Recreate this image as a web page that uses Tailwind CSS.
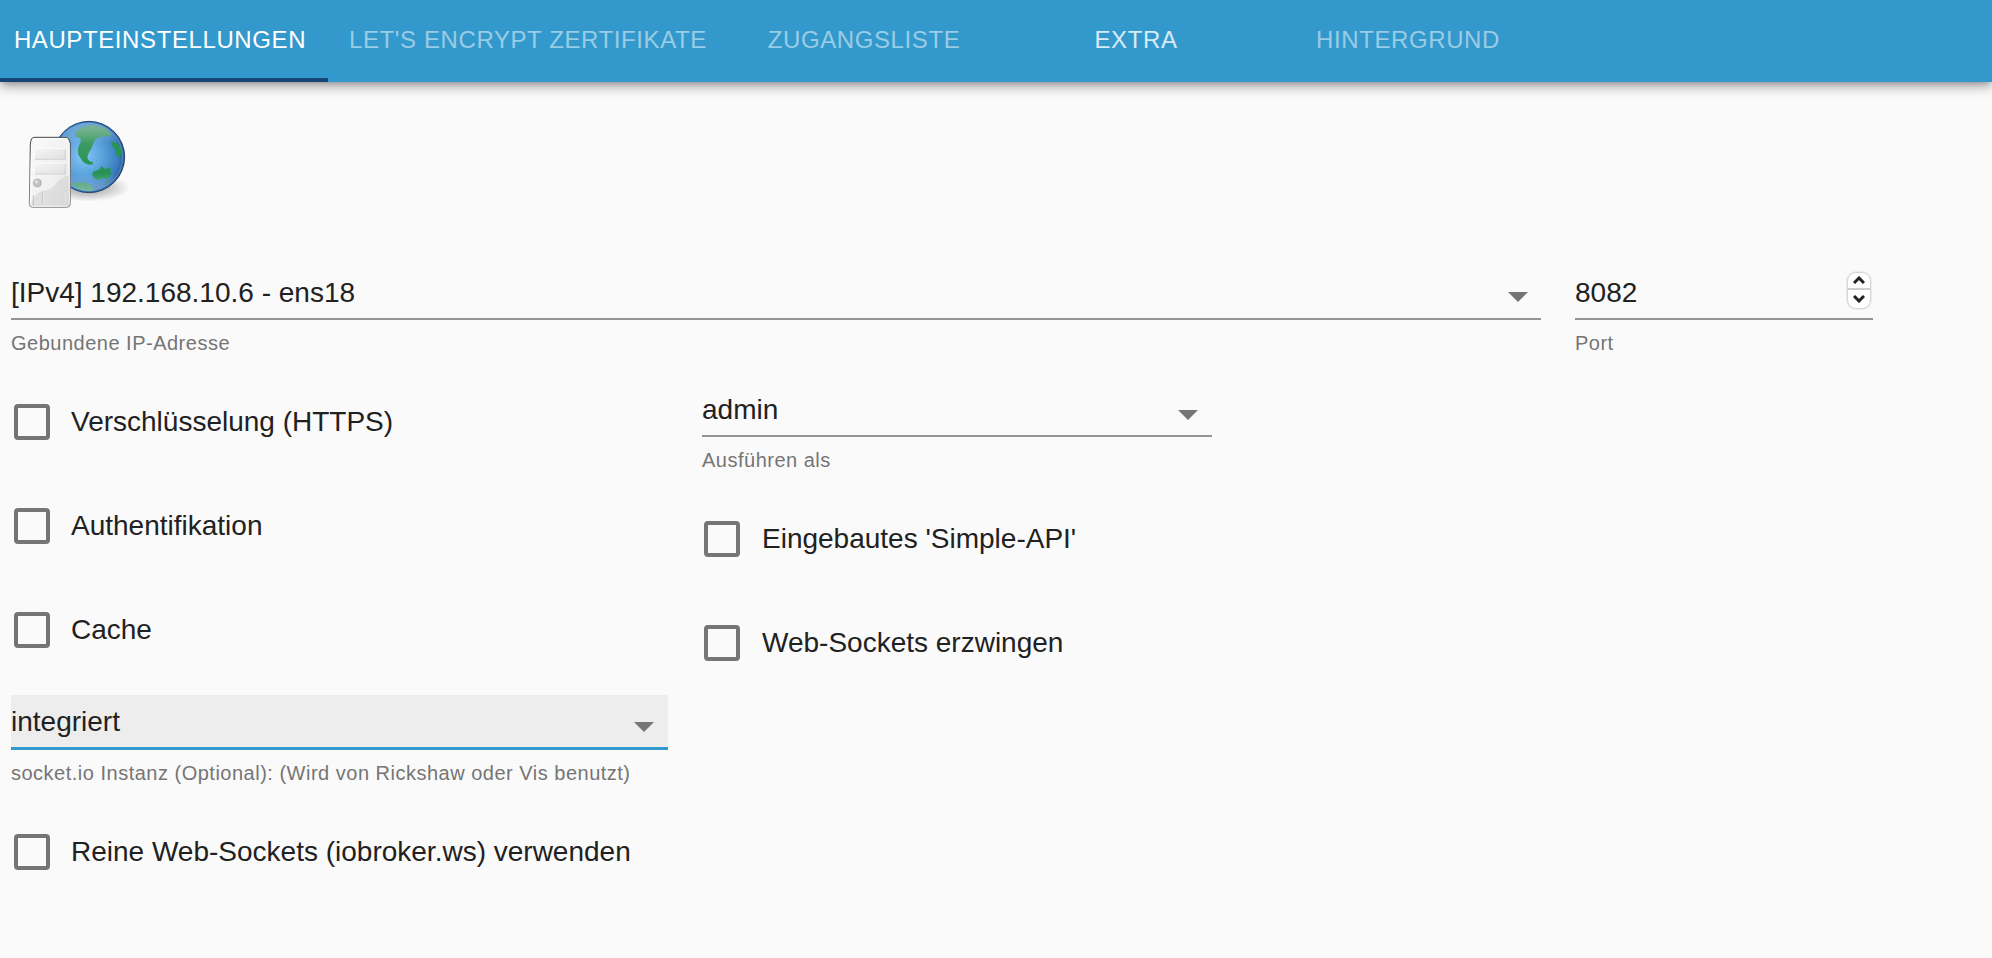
<!DOCTYPE html>
<html lang="de">
<head>
<meta charset="utf-8">
<meta name="viewport" content="width=device-width, initial-scale=1">
<title>Haupteinstellungen</title>
<script src="https://cdn.jsdelivr.net/npm/@tailwindcss/browser@4"></script>
</head>
<body class="min-h-screen bg-[#fafafa] font-['Liberation_Sans',Arial,sans-serif] text-[#212121]">
<header class="bg-[#3399cc] shadow-[0_3px_7px_-2px_rgba(0,0,0,0.3),0_7px_9px_0_rgba(0,0,0,0.14),0_2px_17px_0_rgba(0,0,0,0.12)]">
  <nav role="tablist" class="flex h-[82px] text-2xl tracking-wide whitespace-nowrap uppercase text-white/50">
    <button role="tab" aria-selected="true" class="w-[328px] border-b-4 border-[#164477] pt-0.5 pr-2 text-white uppercase">Haupteinstellungen</button>
    <button role="tab" class="w-[400px] pb-0.5 uppercase">Let's Encrypt Zertifikate</button>
    <button role="tab" class="w-[272px] pb-0.5 uppercase">Zugangsliste</button>
    <button role="tab" class="w-[272px] pb-0.5 text-white/80 uppercase">Extra</button>
    <button role="tab" class="w-[272px] pb-0.5 uppercase">Hintergrund</button>
  </nav>
</header>

<main class="pt-[23px] pr-[119px] pl-[11px]">
  <svg class="h-[120px] w-[140px]" viewBox="3 0 420 360" role="img" aria-label="Web-Server">
    <defs>
      <radialGradient id="sea" cx="0.42" cy="0.48" r="0.62">
        <stop offset="0" stop-color="#86c6f4"/><stop offset="0.45" stop-color="#58a2dc"/><stop offset="0.8" stop-color="#3a7cbd"/><stop offset="1" stop-color="#1f4780"/>
      </radialGradient>
      <linearGradient id="gloss" x1="0" y1="0" x2="0" y2="1">
        <stop offset="0" stop-color="#b9cde0" stop-opacity="0.4"/><stop offset="0.3" stop-color="#fff" stop-opacity="0"/><stop offset="0.75" stop-color="#fff" stop-opacity="0"/><stop offset="1" stop-color="#cfd9ea" stop-opacity="0.35"/>
      </linearGradient>
      <linearGradient id="land" x1="0" y1="0" x2="0" y2="1">
        <stop offset="0" stop-color="#4fa06c"/><stop offset="1" stop-color="#279456"/>
      </linearGradient>
      <linearGradient id="case" x1="0" y1="0" x2="1" y2="1">
        <stop offset="0" stop-color="#fafafa"/><stop offset="0.6" stop-color="#f0f0f0"/><stop offset="1" stop-color="#dcdcdc"/>
      </linearGradient>
      <linearGradient id="rim" x1="0" y1="0" x2="0" y2="1">
        <stop offset="0" stop-color="#444"/><stop offset="1" stop-color="#8c8c8c"/>
      </linearGradient>
      <linearGradient id="panel" x1="0" y1="0" x2="1" y2="1">
        <stop offset="0" stop-color="#f5f5f5"/><stop offset="1" stop-color="#e0e0e0"/>
      </linearGradient>
      <radialGradient id="shade">
        <stop offset="0" stop-color="#000" stop-opacity="0.4"/><stop offset="1" stop-color="#000" stop-opacity="0"/>
      </radialGradient>
    </defs>
    <ellipse cx="235" cy="248" rx="125" ry="42" fill="url(#shade)"/>
    <circle cx="237" cy="156" r="107" fill="url(#sea)" stroke="#29466f" stroke-width="3"/>
    <path d="M196 86C204 68 226 60 252 61C272 62 290 70 304 88C300 98 284 92 270 96C256 100 250 112 247 124C243 134 236 142 233 152C230 162 238 170 248 171C252 175 248 179 240 179C226 178 218 170 211 158C202 148 203 136 206 124C212 112 216 104 208 98C202 96 192 96 196 86Z" fill="url(#land)"/>
    <path d="M303 111C314 108 326 116 332 128C336 142 334 154 324 157C316 154 320 146 316 136C312 128 304 122 303 111Z" fill="#279456"/>
    <path d="M247 206C248 198 258 197 265 195C272 193 270 184 276 184C280 192 288 194 293 188C298 184 303 188 302 198C304 208 300 220 292 222C284 218 276 218 268 224C256 224 246 216 247 206Z" fill="#279456"/>
    <path d="M286 229l8-2-3 9z" fill="#279456"/>
    <path d="M182 236C198 230 222 230 234 236C248 240 256 250 250 257C228 262 200 254 182 236Z" fill="#459d70"/>
    <path d="M152 100l10-6 16 4-4 8z" fill="#8fbf9f"/>
    <circle cx="237" cy="156" r="101" fill="url(#gloss)" stroke="#a7d0f2" stroke-opacity="0.35" stroke-width="3"/>
    <path d="M72 97H168Q173 97 176 102L181 115V296Q181 307 170 307H68Q58 307 58 296L61 117Q63 97 72 97Z" fill="url(#case)" stroke="url(#rim)" stroke-width="3"/>
    <path d="M73 101H167L177 118V294Q177 303 169 303H69Q62 303 62 294L65 118Z" fill="none" stroke="#fff" stroke-width="3"/>
    <path d="M62 300C78 240 118 268 138 236C150 218 164 214 177 212V303H66Z" fill="#cfcfcf" opacity="0.5"/>
    <rect x="73" y="131" width="94" height="32" rx="3" fill="url(#panel)" stroke="#fff" stroke-width="2"/>
    <path d="M74 163H166V133" fill="none" stroke="#bdbdbd" stroke-width="2"/>
    <rect x="73" y="175" width="94" height="32" rx="3" fill="url(#panel)" stroke="#fff" stroke-width="2"/>
    <path d="M74 207H166V177" fill="none" stroke="#bdbdbd" stroke-width="2"/>
    <circle cx="82" cy="234" r="12" fill="#c2c2c2" stroke="#a6a6a6" stroke-width="2"/>
    <circle cx="79" cy="230" r="6" fill="#dadada"/>
    <path d="M97 262V298M70 302V270" stroke="#b5b5b5" stroke-width="2"/>
    <path d="M100 262V298M167 262V298" stroke="#efefef" stroke-width="2"/>
  </svg>

  <div class="mt-[41px] grid grid-cols-[1530fr_298fr] gap-x-[34px]">
    <div>
      <div class="relative border-b-2 border-[#949494]">
        <select id="bind" class="block h-[52px] w-full appearance-none bg-transparent pt-0.5 text-[28px] outline-none"><option>[IPv4] 192.168.10.6 - ens18</option></select>
        <svg class="pointer-events-none absolute top-[26px] right-[13px] h-[10px] w-5" viewBox="0 0 20 10" fill="#757575"><path d="M0 0h20L10 10z"/></svg>
      </div>
      <label for="bind" class="mt-[9px] block text-xl leading-7 tracking-wide text-[#757575]">Gebundene IP-Adresse</label>
    </div>
    <div>
      <div class="flex items-center border-b-2 border-[#949494]">
        <input id="port" type="number" value="8082" class="block h-[52px] w-full min-w-0 flex-1 appearance-none bg-transparent pt-0.5 text-[28px] outline-none [-moz-appearance:textfield] [&::-webkit-inner-spin-button]:appearance-none">
        <div class="mr-[3px] mb-1 grid h-[35px] w-[22px] grid-rows-2 divide-y-2 divide-[#d0d0d0] overflow-hidden rounded-lg bg-white shadow-[0_0_2px_1px_rgba(0,0,0,0.2)]">
          <button aria-label="Erhöhen" class="grid place-items-center"><svg class="h-2 w-3" viewBox="0 0 12 8" fill="none" stroke="#222" stroke-width="3"><path d="M1 7l5-5 5 5"/></svg></button>
          <button aria-label="Verringern" class="grid place-items-center"><svg class="h-2 w-3" viewBox="0 0 12 8" fill="none" stroke="#222" stroke-width="3"><path d="M1 1l5 5 5-5"/></svg></button>
        </div>
      </div>
      <label for="port" class="mt-[9px] block text-xl leading-7 tracking-wide text-[#757575]">Port</label>
    </div>
  </div>

  <div class="mt-[13px] grid grid-cols-[657fr_510fr_627fr] gap-x-[34px] whitespace-nowrap">
    <div>
      <label class="flex h-[104px] items-center gap-[21px] pl-[3px] text-[28px]"><input type="checkbox" class="size-9 shrink-0 appearance-none rounded border-4 border-[#757575]">Verschlüsselung (HTTPS)</label>
      <label class="flex h-[104px] items-center gap-[21px] pl-[3px] text-[28px]"><input type="checkbox" class="size-9 shrink-0 appearance-none rounded border-4 border-[#757575]">Authentifikation</label>
      <label class="flex h-[104px] items-center gap-[21px] pl-[3px] text-[28px]"><input type="checkbox" class="size-9 shrink-0 appearance-none rounded border-4 border-[#757575]">Cache</label>
      <div class="relative mt-[13px] border-b-3 border-[#3399cc] bg-[#ededed]">
        <select id="socket" class="block h-[52px] w-full appearance-none bg-transparent pt-0.5 text-[28px] outline-none"><option>integriert</option></select>
        <svg class="pointer-events-none absolute top-[27px] right-[14px] h-[10px] w-5" viewBox="0 0 20 10" fill="#757575"><path d="M0 0h20L10 10z"/></svg>
      </div>
      <label for="socket" class="mt-[9px] block text-xl leading-7 tracking-wide text-[#757575]">socket.io Instanz (Optional): (Wird von Rickshaw oder Vis benutzt)</label>
      <label class="mt-[13px] flex h-[104px] items-center gap-[21px] pl-[3px] text-[28px]"><input type="checkbox" class="size-9 shrink-0 appearance-none rounded border-4 border-[#757575]">Reine Web-Sockets (iobroker.ws) verwenden</label>
    </div>
    <div>
      <div class="relative mt-[13px] border-b-2 border-[#949494]">
        <select id="user" class="block h-[52px] w-full appearance-none bg-transparent pt-0.5 text-[28px] outline-none"><option>admin</option></select>
        <svg class="pointer-events-none absolute top-[27px] right-[14px] h-[10px] w-5" viewBox="0 0 20 10" fill="#757575"><path d="M0 0h20L10 10z"/></svg>
      </div>
      <label for="user" class="mt-[9px] block text-xl leading-7 tracking-wide text-[#757575]">Ausführen als</label>
      <label class="mt-[13px] flex h-[104px] items-center gap-[22px] pl-[2px] text-[28px]"><input type="checkbox" class="size-9 shrink-0 appearance-none rounded border-4 border-[#757575]">Eingebautes 'Simple-API'</label>
      <label class="flex h-[104px] items-center gap-[22px] pl-[2px] text-[28px]"><input type="checkbox" class="size-9 shrink-0 appearance-none rounded border-4 border-[#757575]">Web-Sockets erzwingen</label>
    </div>
  </div>
</main>
</body>
</html>
